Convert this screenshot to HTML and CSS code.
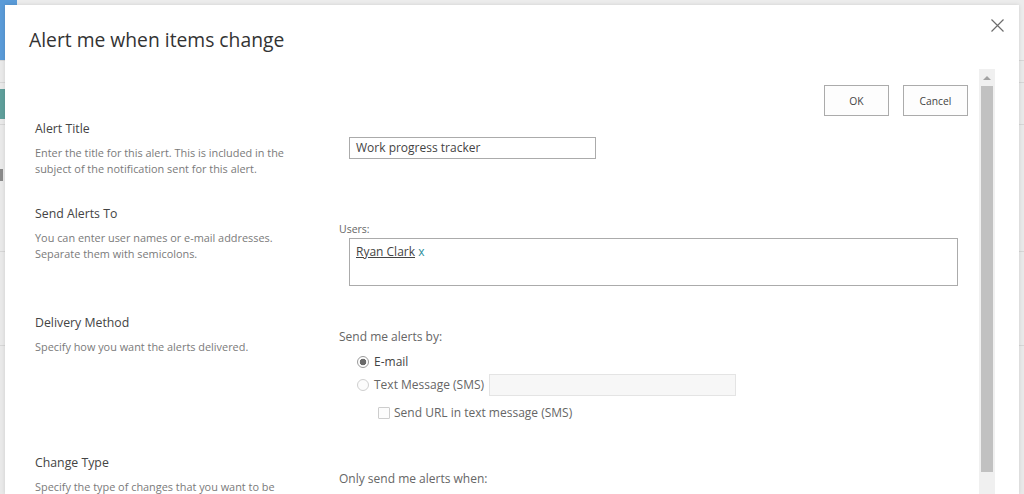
FILE: index.html
```html
<!DOCTYPE html>
<html>
<head>
    <link rel="stylesheet" href="styles.css">
</head>
<body>
    <div class="page">
        <div class="page-header">
            <div class="app-tile"></div>
            <div class="suite-bar"></div>
        </div>
        <div class="page-row row-short"></div>
        <div class="page-row row-nav">
            <span class="nav-button">New</span>
        </div>
        <div class="page-row row-tall">
            <span class="nav-mark"></span>
        </div>
        <div class="page-row row-mid"></div>
        <div class="page-row row-mid"></div>
    </div>

    <div class="dialog">
        <div class="dialog-header">
            <h1 class="dialog-title">Alert me when items change</h1>
            <button type="button" class="close-button" title="Close">
                <svg width="13" height="13" viewBox="0 0 13 13">
                    <path d="M0.5 0.5 L12.5 12.5 M12.5 0.5 L0.5 12.5" stroke="#6d6d6d" stroke-width="1.2" fill="none"/>
                </svg>
            </button>
        </div>

        <div class="dialog-body">
            <div class="dialog-content">
                <div class="actions">
                    <button type="button" class="action-button">OK</button>
                    <button type="button" class="action-button">Cancel</button>
                </div>

                <div class="section">
                    <div class="section-info">
                        <div class="field-label">Alert Title</div>
                        <div class="field-desc">Enter the title for this alert. This is included in the subject of the notification sent for this alert.</div>
                    </div>
                    <div class="section-body">
                        <div class="text-input">Work progress tracker</div>
                    </div>
                </div>

                <div class="section">
                    <div class="section-info">
                        <div class="field-label">Send Alerts To</div>
                        <div class="field-desc">You can enter user names or e-mail addresses.<br>Separate them with semicolons.</div>
                    </div>
                    <div class="section-body body-users">
                        <div class="small-label">Users:</div>
                        <div class="people-box">
                            <a class="person">Ryan Clark</a> <span class="remove-person">x</span>
                        </div>
                    </div>
                </div>

                <div class="section section-delivery">
                    <div class="section-info">
                        <div class="field-label">Delivery Method</div>
                        <div class="field-desc">Specify how you want the alerts delivered.</div>
                    </div>
                    <div class="section-body body-delivery">
                        <div class="option-title">Send me alerts by:</div>
                        <div class="option-row">
                            <span class="radio checked"></span>
                            <span class="option-text">E-mail</span>
                        </div>
                        <div class="option-row row-sms">
                            <span class="radio"></span>
                            <span class="option-text muted">Text Message (SMS)</span>
                            <span class="sms-input"></span>
                        </div>
                        <div class="option-row row-check">
                            <span class="checkbox"></span>
                            <span class="option-text muted">Send URL in text message (SMS)</span>
                        </div>
                    </div>
                </div>

                <div class="section">
                    <div class="section-info">
                        <div class="field-label">Change Type</div>
                        <div class="field-desc">Specify the type of changes that you want to be</div>
                    </div>
                    <div class="section-body">
                        <div class="option-title">Only send me alerts when:</div>
                        <div class="option-row">
                            <span class="radio"></span>
                        </div>
                    </div>
                </div>
            </div>

            <div class="scrollbar">
                <div class="scroll-up"></div>
                <div class="scroll-thumb"></div>
            </div>
        </div>
    </div>
</body>
</html>
```
FILE: styles.css
```css
body {
    margin: 0;
    height: 494px;
    overflow: hidden;
    background-color: #e9e9e9;
    font-family: "Open Sans", "Noto Sans", sans-serif;
    color: #444;
}

/* page behind the dialog, dimmed */
.page {
    height: 494px;
}
.page-header {
    display: flex;
    height: 60px;
}
.app-tile {
    width: 17px;
    background-color: #5a9bd8;
}
.suite-bar {
    flex: 1;
    background-color: #ececec;
}
.page-row {
    border-top: 1px solid #d6d6d6;
}
.row-short {
    height: 21px;
}
.row-nav {
    height: 42px;
    padding-top: 6px;
    box-sizing: border-box;
}
.nav-button {
    display: inline-block;
    width: 60px;
    height: 30px;
    line-height: 30px;
    background-color: #5f9f9b;
    color: #e8f2f1;
    font-size: 12px;
    text-align: right;
}
.row-tall {
    height: 127px;
    padding-top: 44px;
    box-sizing: border-box;
}
.nav-mark {
    display: block;
    width: 3px;
    height: 12px;
    background-color: #8a8a8a;
}
.row-mid {
    height: 93px;
}

/* dialog */
.dialog {
    position: absolute;
    left: 5px;
    top: 5px;
    width: 1014px;
    height: 489px;
    overflow: hidden;
    background-color: #fff;
    box-shadow: 0 0 4px rgba(0, 0, 0, 0.12);
}
.dialog-header {
    height: 64px;
    padding: 23px 0 0 24px;
    box-sizing: border-box;
}
.dialog-title {
    margin: 0;
    font-size: 19.3px;
    font-weight: 400;
    line-height: 24px;
    color: #333;
}
.close-button {
    position: absolute;
    top: 14px;
    right: 15px;
    width: 13px;
    height: 13px;
    padding: 0;
    border: none;
    background: none;
}
.close-button svg {
    display: block;
}

.dialog-body {
    display: flex;
    height: 425px;
    overflow: hidden;
    padding-right: 24px;
}
.dialog-content {
    flex: 1;
    overflow: hidden;
    padding: 16px 11px 0 30px;
}
.actions {
    display: flex;
    justify-content: flex-end;
    gap: 14px;
}
.action-button {
    width: 65px;
    height: 31px;
    padding: 0;
    border: 1px solid #ababab;
    background-color: #fdfdfd;
    font-family: inherit;
    font-size: 10.3px;
    color: #444;
}

.section {
    display: grid;
    grid-template-columns: 304px 1fr;
    margin-top: 5px;
    margin-bottom: 29px;
}
.section + .section {
    margin-top: 0;
}
.field-label {
    font-size: 12.3px;
    line-height: 16px;
    margin-bottom: 8px;
    color: #444;
}
.field-desc {
    font-size: 10.9px;
    line-height: 16px;
    color: #7a7a7a;
    padding-right: 30px;
}
.section-body {
    padding-top: 16px;
    font-size: 12px;
    line-height: 16px;
}
.text-input {
    width: 247px;
    height: 22px;
    box-sizing: border-box;
    border: 1px solid #ababab;
    padding-left: 6px;
    line-height: 20px;
    color: #444;
}
.body-users {
    padding-top: 15px;
}
.small-label {
    font-size: 10.5px;
    color: #666;
    margin-bottom: 1px;
}
.people-box {
    width: 609px;
    height: 48px;
    box-sizing: border-box;
    margin-left: 10px;
    border: 1px solid #ababab;
    padding: 5px 6px;
}
.person {
    color: #444;
    text-decoration: underline;
}
.remove-person {
    color: #2c8f9c;
}
.section-body .text-input {
    margin-left: 10px;
}

.section-delivery {
    margin-bottom: 34px;
}
.body-delivery {
    padding-top: 14px;
}
.option-title {
    color: #666;
}
.option-row {
    display: flex;
    align-items: center;
    gap: 5px;
    height: 16px;
    margin-top: 9px;
    padding-left: 18px;
}
.row-sms {
    height: 22px;
    margin-top: 4px;
}
.row-check {
    padding-left: 39px;
    gap: 4px;
}
.option-text.muted {
    color: #666;
}
.radio {
    width: 12px;
    height: 12px;
    box-sizing: border-box;
    border: 1px solid #cfcfcf;
    border-radius: 50%;
    background-color: #fcfcfc;
}
.radio.checked {
    border-color: #9a9a9a;
    background: radial-gradient(circle, #6a6a6a 0, #6a6a6a 3px, #fff 3.6px);
}
.checkbox {
    width: 12px;
    height: 12px;
    box-sizing: border-box;
    border: 1px solid #cdcdcd;
    border-radius: 1px;
    background-color: #fcfcfc;
}
.sms-input {
    width: 247px;
    height: 22px;
    box-sizing: border-box;
    border: 1px solid #e4e4e4;
    background-color: #f7f7f7;
}

/* drawn scrollbar of the dialog body */
.scrollbar {
    width: 16px;
    flex-shrink: 0;
    background-color: #f0f0f0;
}
.scroll-up {
    height: 17px;
    position: relative;
}
.scroll-up::after {
    content: "";
    position: absolute;
    left: 4px;
    top: 7px;
    border-left: 4px solid transparent;
    border-right: 4px solid transparent;
    border-bottom: 4px solid #a3a3a3;
}
.scroll-thumb {
    height: 386px;
    margin: 0 2px;
    background-color: #c1c1c1;
}
```
